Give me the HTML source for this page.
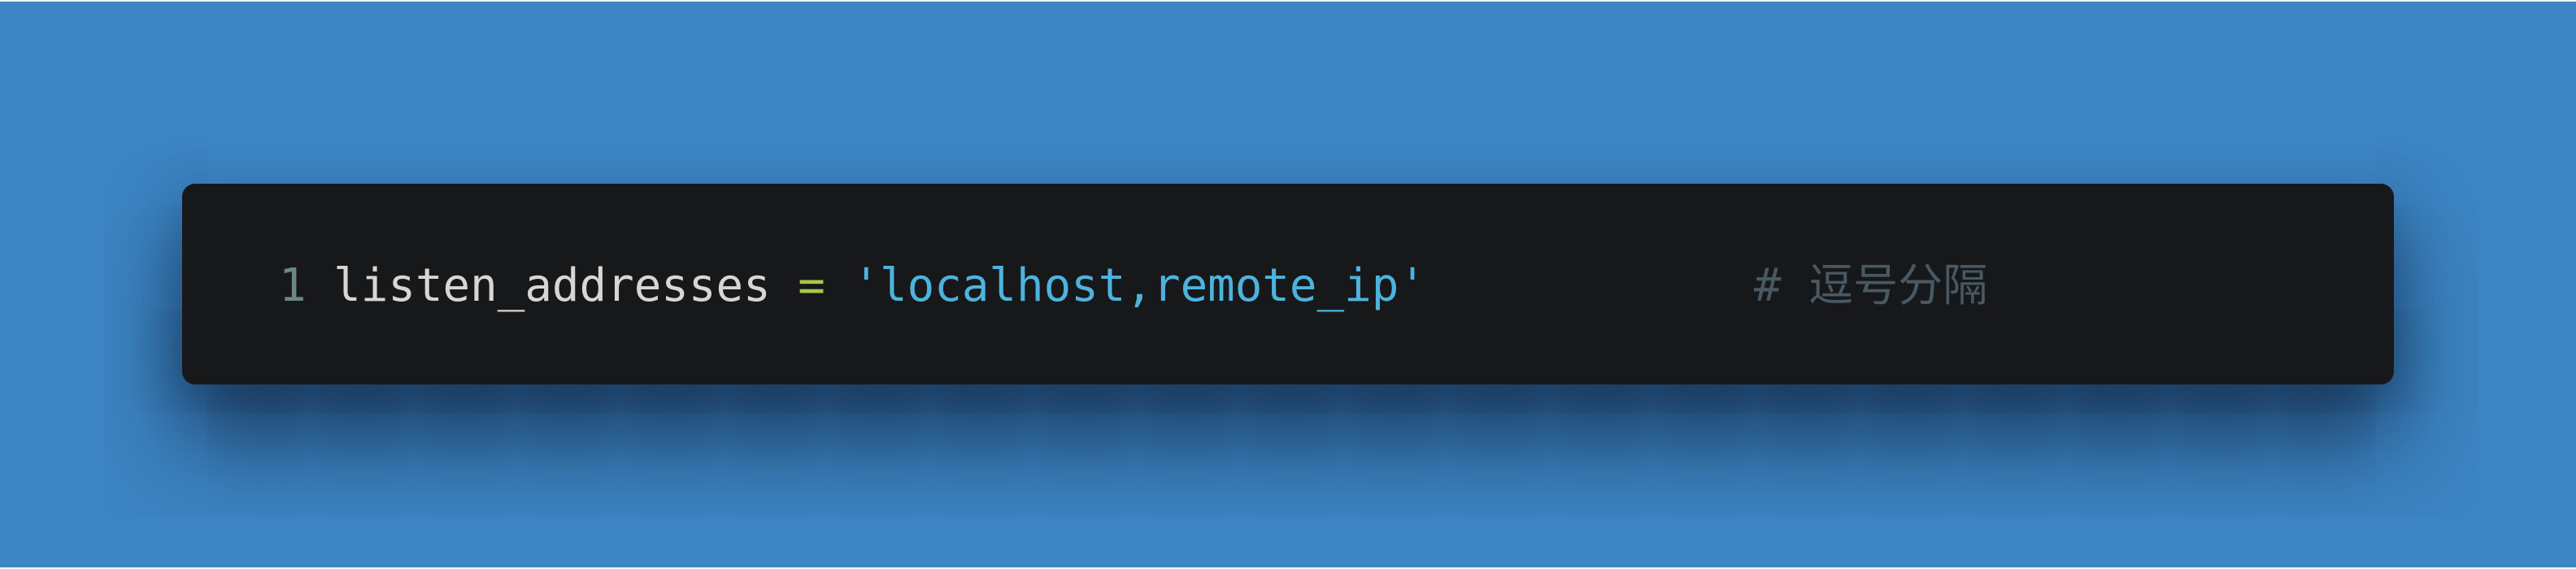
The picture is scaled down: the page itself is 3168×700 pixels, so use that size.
<!DOCTYPE html>
<html><head><meta charset="utf-8"><style>
html,body{margin:0;padding:0;width:3168px;height:700px;overflow:hidden;background:#f4f6f8}
.bg{position:absolute;left:0;top:2px;width:3168px;height:696px;background:#3c84c3;overflow:hidden}
.card{position:absolute;left:224px;top:224px;width:2720px;height:247px;background:#17181a;border-radius:16px;box-shadow:0 70px 110px rgba(18,40,70,0.8),0 20px 60px rgba(18,40,70,0.4)}
.code{position:absolute;left:119px;top:80px;font-family:"DejaVu Sans Mono","Liberation Mono","Noto Sans CJK SC",monospace;font-size:55.8px;line-height:80px;white-space:pre;color:#d6d6d6}
.n{color:#6a8784}.e{color:#a4c94a}.s{color:#4db3de}.c{color:#475963}
.c .cj{font-family:"Noto Sans CJK SC",sans-serif;font-size:55px}
</style></head><body>
<div class="bg"><div class="card"><div class="code"><span class="n">1</span> listen_addresses <span class="e">=</span> <span class="s">'localhost,remote_ip'</span>            <span class="c"># <span class="cj">逗号分隔</span></span></div></div></div>
</body></html>
